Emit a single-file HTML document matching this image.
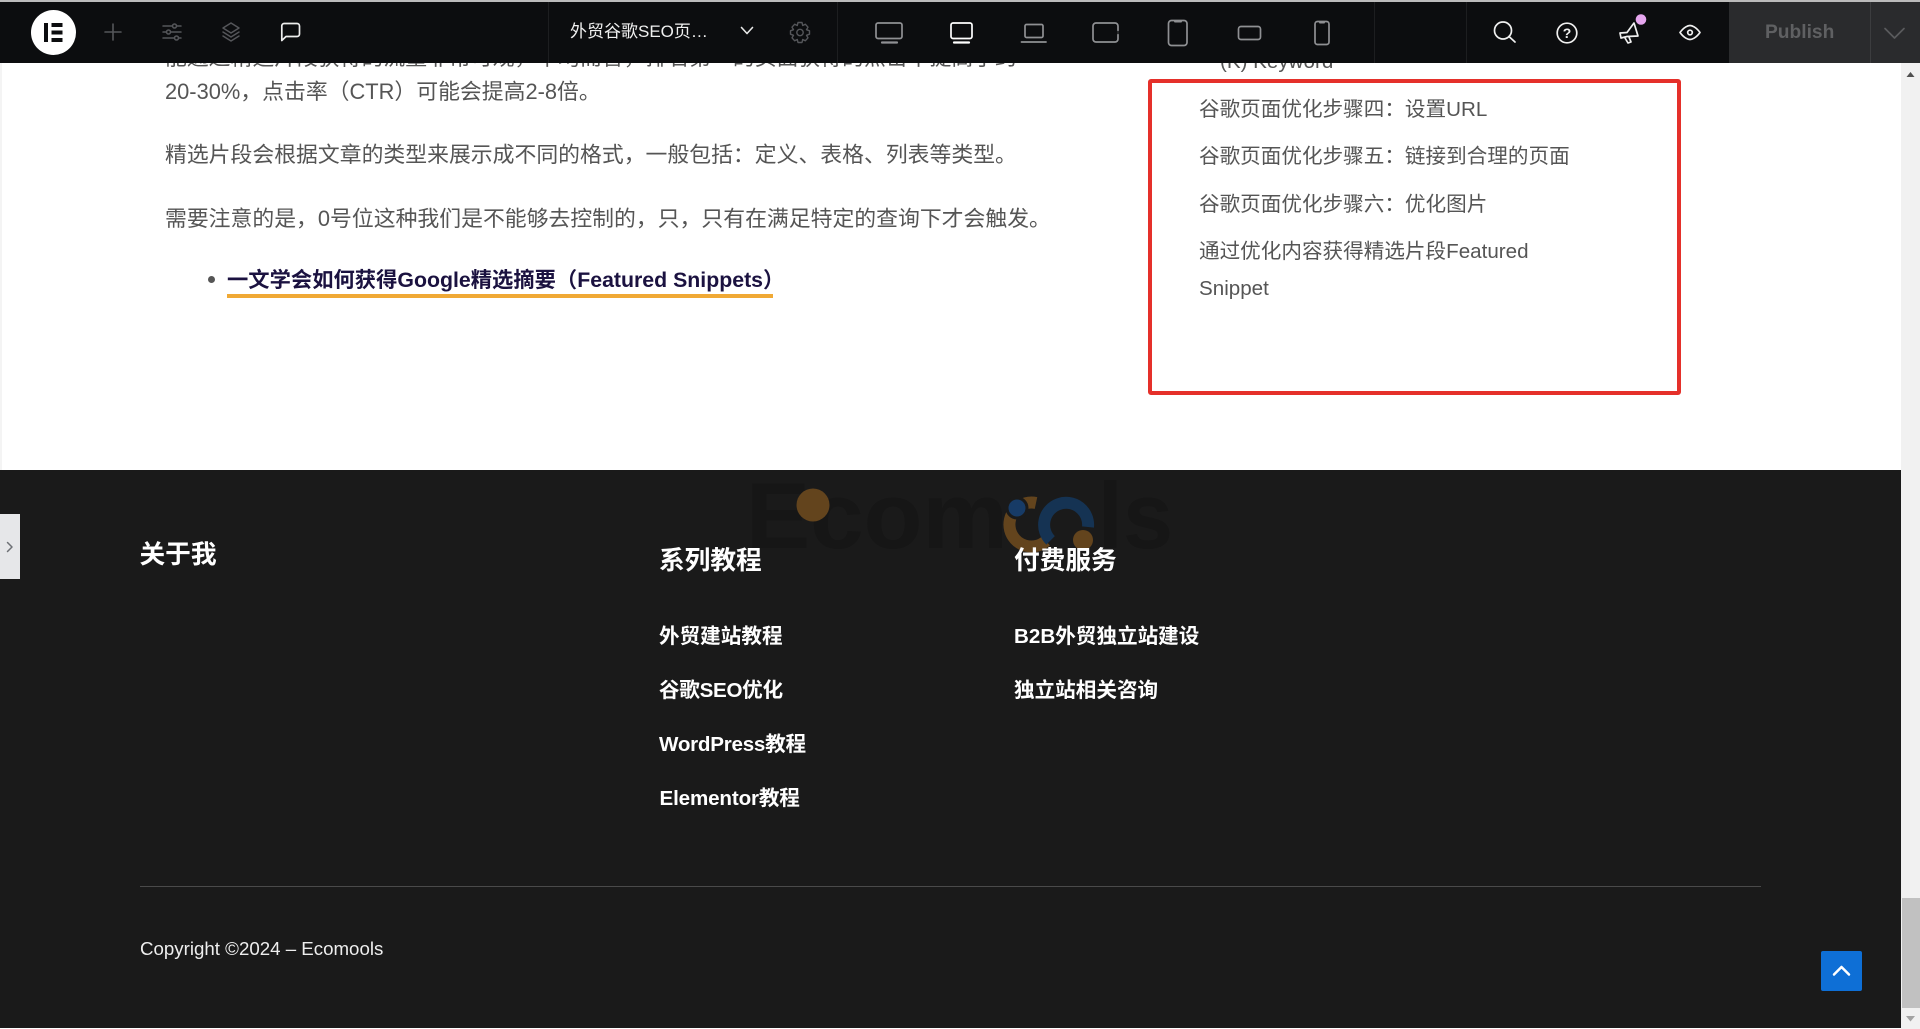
<!DOCTYPE html>
<html lang="zh"><head><meta charset="utf-8"><title>Elementor</title>
<style>
html,body{margin:0;padding:0;width:1920px;height:1029px;overflow:hidden;background:#fff}
body{position:relative;font-family:"Liberation Sans","Noto Sans CJK SC",sans-serif}
.t{position:absolute;white-space:nowrap;line-height:30px;height:30px}
.p{font-size:21.85px;color:#555;left:165px}
.s{font-size:20.6px;color:#555;left:1199px}
.h{font-size:25.7px;font-weight:700;color:#fff}
.l{font-size:20.6px;font-weight:700;color:#fff}
svg{position:absolute;overflow:visible}
.ic{fill:none;stroke-linecap:round;stroke-linejoin:round}
.sep{position:absolute;top:2px;height:61px;width:1px;background:#1d1e20}
</style></head><body>

<!-- article -->
<div class="t p" style="top:43px;">能通过精选片段获得的流量非常可观，平均而言，排名第一的页面获得的点击率提高了约</div>
<div class="t p" style="top:76.500px">20-30%，点击率（CTR）可能会提高2-8倍。</div>
<div class="t p" style="top:140px">精选片段会根据文章的类型来展示成不同的格式，一般包括：定义、表格、列表等类型。</div>
<div class="t p" style="top:203.500px">需要注意的是，0号位这种我们是不能够去控制的，只，只有在满足特定的查询下才会触发。</div>
<div style="position:absolute;left:208px;top:276px;width:7px;height:7px;border-radius:50%;background:#555"></div>
<div class="t" style="left:227px;top:265px;font-size:21.3px;font-weight:700;color:#1b1240">一文学会如何获得Google精选摘要（Featured Snippets）</div>
<div style="position:absolute;left:227px;top:294px;width:546px;height:4px;background:#f0a935"></div>

<!-- sidebar -->
<div class="t s" style="left:1220px;top:47px">(K) Keyword</div>
<div style="position:absolute;left:1148px;top:79px;width:525px;height:308px;border:4px solid #e5302a;border-radius:3px"></div>
<div class="t s" style="top:95px">谷歌页面优化步骤四：设置URL</div>
<div class="t s" style="top:142px">谷歌页面优化步骤五：链接到合理的页面</div>
<div class="t s" style="top:190px">谷歌页面优化步骤六：优化图片</div>
<div class="t s" style="top:237px">通过优化内容获得精选片段Featured</div>
<div class="t s" style="top:274px">Snippet</div>

<!-- left edge -->
<div style="position:absolute;left:0;top:63px;width:2px;height:407px;background:#f4f4f4"></div>

<!-- footer -->
<div style="position:absolute;left:0;top:470px;width:1901px;height:558px;background:#1a1a1a"></div>
<svg style="left:0;top:0" width="1920" height="1029">
<text x="746" y="548" font-size="94" font-weight="700" fill="#161616" font-family="Liberation Sans,sans-serif" textLength="262" lengthAdjust="spacingAndGlyphs">Ecom</text>
<text x="1098" y="548" font-size="94" font-weight="700" fill="#161616" font-family="Liberation Sans,sans-serif" textLength="75" lengthAdjust="spacingAndGlyphs">ls</text>
<circle cx="813" cy="505" r="16.5" fill="#63441d"/>
<path d="M1036 503A22 22 0 1 0 1046 541" fill="none" stroke="#63441d" stroke-width="12"/>
<path d="M1050.600 540.400A22 22 0 1 1 1088 527" fill="none" stroke="#153353" stroke-width="12"/>
<circle cx="1017" cy="508" r="10" fill="#173b66" stroke="#1a1a1a" stroke-width="3"/>
<circle cx="1083" cy="540" r="10" fill="#63441d"/>
</svg>
<div class="t h" style="left:139.500px;top:539.500px">关于我</div>
<div class="t h" style="left:659px;top:545.500px">系列教程</div>
<div class="t h" style="left:1014px;top:545.500px">付费服务</div>
<div class="t l" style="left:659px;top:622px">外贸建站教程</div>
<div class="t l" style="left:659px;top:675.500px"><span style="letter-spacing:-.3px">谷歌SEO优化</span></div>
<div class="t l" style="left:659px;top:729.500px"><span style="letter-spacing:-.25px">WordPress教程</span></div>
<div class="t l" style="left:659.500px;top:783.500px"><span style="letter-spacing:-.15px">Elementor教程</span></div>
<div class="t l" style="left:1014px;top:622px">B2B外贸独立站建设</div>
<div class="t l" style="left:1014px;top:675.500px">独立站相关咨询</div>
<div style="position:absolute;left:140px;top:886px;width:1621px;height:1px;background:#4a4a4a"></div>
<div class="t" style="left:140px;top:934px;font-size:18.7px;color:#eee">Copyright ©2024 – Ecomools</div>
<div style="position:absolute;left:1821px;top:951px;width:41px;height:40px;background:#0e6fd6;border-radius:2px"></div>
<svg style="left:1821px;top:951px" width="41" height="40"><path class="ic" d="M13 23.500L20.500 16L28 23.500" stroke="#fff" stroke-width="2.500"/></svg>

<!-- left tab -->
<div style="position:absolute;left:0;top:514px;width:20px;height:65px;background:#e6e7e9"></div>
<svg style="left:6px;top:541px" width="8" height="12"><path class="ic" d="M1.500 1.500L6 6L1.500 10.500" stroke="#6d7075" stroke-width="1.500"/></svg>

<!-- scrollbar -->
<div style="position:absolute;left:1901px;top:63px;width:19px;height:966px;background:#f1f1f1"></div>
<div style="position:absolute;left:1902px;top:898px;width:18px;height:110px;background:#c1c1c1"></div>
<svg style="left:1901px;top:63px" width="19" height="966">
<path d="M5.500 14L9.500 9L13.500 14Z" fill="#505050"/>
<path d="M5 953L9.500 958.500L14 953Z" fill="#a3a3a3"/>
</svg>

<!-- toolbar -->
<div style="position:absolute;left:0;top:0;width:1920px;height:2px;background:#bbb"></div>
<div style="position:absolute;left:0;top:2px;width:1920px;height:61px;background:#0c0d0f"></div>
<div style="position:absolute;left:1729px;top:2px;width:191px;height:61px;background:#2a2b2d"></div>
<div class="sep" style="left:548px"></div>
<div class="sep" style="left:837px"></div>
<div class="sep" style="left:1374px"></div>
<div class="sep" style="left:1466px"></div>
<div class="sep" style="left:1870px;background:#3c3d3f"></div>

<svg style="left:31px;top:10px" width="45" height="45">
<circle cx="22.500" cy="22.500" r="22.500" fill="#fff"/>
<rect x="13" y="13" width="4" height="19" fill="#0c0d0f"/>
<rect x="20.500" y="13" width="11" height="4" fill="#0c0d0f"/>
<rect x="20.500" y="20.500" width="11" height="4" fill="#0c0d0f"/>
<rect x="20.500" y="28" width="11" height="4" fill="#0c0d0f"/>
</svg>
<svg style="left:103px;top:22px" width="20" height="20"><path class="ic" d="M10 2V18M2 10H18" stroke="#55565a" stroke-width="1.600"/></svg>
<svg style="left:162px;top:22px" width="20" height="20"><g class="ic" stroke="#55565a" stroke-width="1.500">
<path d="M1 4H10.500M14.500 4H19M1 10H4.500M8.500 10H19M1 16H12.500M16.500 16H19"/>
<circle cx="12.500" cy="4" r="2"/><circle cx="6.500" cy="10" r="2"/><circle cx="14.500" cy="16" r="2"/></g></svg>
<svg style="left:221px;top:21px" width="20" height="22"><g class="ic" stroke="#55565a" stroke-width="1.500">
<path d="M10 2L18 7L10 12L2 7Z"/><path d="M2 11L10 16L18 11"/><path d="M2 15L10 20L18 15"/></g></svg>
<svg style="left:280px;top:22px" width="21" height="21"><path class="ic" stroke="#eee" stroke-width="1.700" d="M4 1.500H17A2.500 2.500 0 0 1 19.500 4V12A2.500 2.500 0 0 1 17 14.500H6L1.800 18.500V4A2.500 2.500 0 0 1 4 1.500Z"/></svg>

<div class="t" style="left:570px;top:17px;font-size:17px;color:#f0f0f0">外贸谷歌SEO页…</div>
<svg style="left:740px;top:26px" width="14" height="10"><path class="ic" d="M1.500 1.500L7 7.500L12.500 1.500" stroke="#e8e8e8" stroke-width="1.600"/></svg>
<svg style="left:789px;top:21px" width="22" height="23"><g class="ic" stroke="#55565a" stroke-width="1.400">
<path d="M9 1.500H13L13.700 4.500L16.300 3.200L19 6.200L17.500 8.700L20.500 9.800V13.200L17.500 14.300L19 16.800L16.300 19.800L13.700 18.500L13 21.500H9L8.300 18.500L5.700 19.800L3 16.800L4.500 14.300L1.500 13.200V9.800L4.500 8.700L3 6.200L5.700 3.200L8.300 4.500Z"/><circle cx="11" cy="11.500" r="3.200"/></g></svg>

<!-- devices -->
<svg style="left:0;top:0" width="1920" height="63"><g class="ic" stroke="#8f9093" stroke-width="1.700">
<rect x="876" y="23" width="26" height="15.500" rx="2"/><path d="M882 42.500H897" stroke-width="2.200"/>
<g stroke="#fff"><rect x="951" y="23" width="21" height="15.500" rx="2"/><path d="M954 42.500H969" stroke-width="2.200"/></g>
<rect x="1025" y="24.500" width="18" height="13" rx="1.500"/><path d="M1021.500 42H1046" stroke-width="1.800"/>
<rect x="1093" y="23" width="25" height="19" rx="3"/><path d="M1118 31.500V33.500" stroke="#0c0d0f" stroke-width="1.500"/>
<rect x="1168.500" y="20.500" width="18.500" height="25" rx="3"/><path d="M1175 21.500H1181" stroke-width="2"/>
<rect x="1238.500" y="26.500" width="22" height="13" rx="2.500"/>
<rect x="1315" y="21.500" width="14" height="23" rx="2.500"/><path d="M1320 22.500H1324" stroke-width="2"/>
</g></svg>

<!-- right icons -->
<svg style="left:0;top:0" width="1920" height="63"><g class="ic" stroke="#f0f0f0" stroke-width="1.700">
<circle cx="1503" cy="30.500" r="8.500"/><path d="M1509 36.500L1515 42"/>
<circle cx="1567" cy="33" r="9.800"/>
<path d="M1620 33L1627 32.500L1634 23L1638 36L1627 36.500L1621 38Z"/><path d="M1625 38L1628 43L1631 42L1629 37"/>
<path d="M1680 32.500C1684 27 1688 25.500 1690 25.500C1692 25.500 1696 27 1700 32.500C1696 38 1692 39.500 1690 39.500C1688 39.500 1684 38 1680 32.500Z"/>
<circle cx="1690" cy="32.500" r="2.300"/>
</g>
<text x="1567" y="38" font-size="14" font-weight="700" fill="#f0f0f0" text-anchor="middle" font-family="Liberation Sans,sans-serif">?</text>
<circle cx="1641" cy="19.500" r="5.300" fill="#e6a6ee"/>
<path class="ic" d="M1885 28.500L1894.500 38L1904 28.500" stroke="#5a5b5d" stroke-width="1.700"/>
</svg>
<div class="t" style="left:1765px;top:18px;font-size:19.200px;font-weight:700;color:#5f6062">Publish</div>
</body></html>
